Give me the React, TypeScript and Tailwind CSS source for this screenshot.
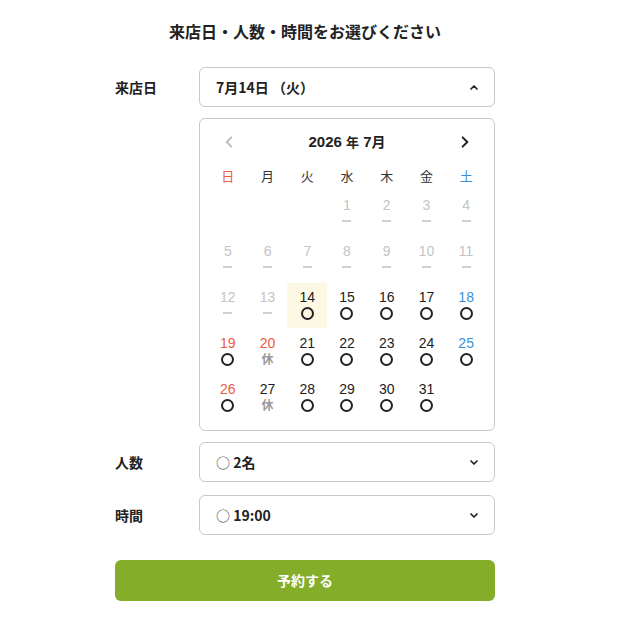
import React from "react";

type Cell = { d: number; kind: "past" | "ok" | "closed" } | null;

const FONT = { fontFamily: '"Liberation Sans", "Noto Sans CJK JP", sans-serif' };
const JP = { fontFamily: '"Noto Sans CJK JP", "Liberation Sans", sans-serif' };

function Chevron({ dir, color = "#222", size = 12 }: { dir: "up" | "down" | "left" | "right"; color?: string; size?: number }) {
  const paths: Record<string, string> = {
    up: "M3 8 L6 5 L9 8",
    down: "M3 5 L6 8 L9 5",
    left: "M8 2 L4 6 L8 10",
    right: "M4 2 L8 6 L4 10",
  };
  return (
    <svg width={size} height={size} viewBox="0 0 12 12" fill="none">
      <path d={paths[dir]} stroke={color} strokeWidth={1.7} strokeLinecap="round" strokeLinejoin="round" />
    </svg>
  );
}

export default function App() {
  const cells: Cell[] = [];
  for (let i = 0; i < 3; i++) cells.push(null);
  for (let d = 1; d <= 31; d++) {
    let kind: "past" | "ok" | "closed" = "ok";
    if (d <= 13) kind = "past";
    else if (d === 20 || d === 27) kind = "closed";
    cells.push({ d, kind });
  }
  const week = ["日", "月", "火", "水", "木", "金", "土"];

  const numColor = (idx: number, c: NonNullable<Cell>) => {
    if (c.kind === "past") return "text-[#c4c4c4]";
    const col = idx % 7;
    if (col === 0) return "text-[#ec5a3f]";
    if (col === 6) return "text-[#3a8fd9]";
    if (c.d === 20) return "text-[#ec5a3f]";
    return "text-[#222]";
  };

  return (
    <div className="w-[623px] min-h-[625px] bg-white" style={FONT}>
      <div className="ml-[115px] w-[380px] pt-[20px] pb-[24px]">
        <h1 className="text-center text-[16px] leading-[22px] font-bold text-[#222]" style={JP}>
          来店日・人数・時間をお選びください
        </h1>

        <div className="mt-[25px] flex">
          <div className="w-[84px] h-[40px] flex items-center text-[14px] font-bold text-[#222]" style={JP}>
            来店日
          </div>
          <div className="flex-1 flex flex-col">
            <div className="h-[40px] border border-[#c8c8c8] rounded-[6px] flex items-center justify-between pl-[16px] pr-[14px]">
              <span className="text-[14px] font-bold text-[#222]" style={JP}>7月14日 （火）</span>
              <Chevron dir="up" />
            </div>

            <div className="mt-[11px] border border-[#c8c8c8] rounded-[6px] px-[8px] pt-[11px] pb-[10px]">
              <div className="h-[24px] flex items-center justify-between px-[14px]">
                <Chevron dir="left" color="#bdbdbd" size={14} />
                <span className="text-[15px] font-bold text-[#222]">
                  2026 <span className="text-[13px]" style={JP}>年</span> 7<span className="text-[14px]" style={JP}>月</span>
                </span>
                <Chevron dir="right" color="#222" size={14} />
              </div>
              <div className="mt-[12px] grid grid-cols-7 h-[20px] items-center">
                {week.map((w, i) => (
                  <div
                    key={w}
                    className={`text-center text-[13px] ${i === 0 ? "text-[#ec5a3f]" : i === 6 ? "text-[#3a8fd9]" : "text-[#333]"}`}
                    style={JP}
                  >
                    {w}
                  </div>
                ))}
              </div>
              <div className="mt-[5px] grid grid-cols-7 gap-y-[1px]">
                {cells.map((c, i) =>
                  c === null ? (
                    <div key={"e" + i} className="h-[45px]" />
                  ) : (
                    <div
                      key={c.d}
                      className={`h-[45px] flex flex-col items-center pt-[6px] ${c.d === 14 ? "bg-[#fdf8e3]" : ""}`}
                    >
                      <div className={`text-[14px] leading-[16px] ${numColor(i, c)}`}>{c.d}</div>
                      {c.kind === "past" && <div className="mt-[7px] w-[9px] h-[2px] bg-[#cfcfcf]" />}
                      {c.kind === "ok" && (
                        <div className="mt-[2px] w-[13px] h-[13px] rounded-full border-[2.5px] border-[#222]" />
                      )}
                      {c.kind === "closed" && (
                        <div className="mt-[0px] text-[12px] leading-[16px] font-bold text-[#999]" style={JP}>
                          休
                        </div>
                      )}
                    </div>
                  )
                )}
              </div>
            </div>
          </div>
        </div>

        <div className="mt-[11px] flex">
          <div className="w-[84px] h-[40px] flex items-center text-[14px] font-bold text-[#222]" style={JP}>
            人数
          </div>
          <div className="flex-1 h-[40px] border border-[#c8c8c8] rounded-[6px] flex items-center justify-between pl-[16px] pr-[14px]">
            <span className="text-[14px] text-[#222]" style={JP}>
              <span className="text-[#444]">○</span> <span className="font-bold">2名</span>
            </span>
            <Chevron dir="down" />
          </div>
        </div>

        <div className="mt-[13px] flex">
          <div className="w-[84px] h-[40px] flex items-center text-[14px] font-bold text-[#222]" style={JP}>
            時間
          </div>
          <div className="flex-1 h-[40px] border border-[#c8c8c8] rounded-[6px] flex items-center justify-between pl-[16px] pr-[14px]">
            <span className="text-[14px] text-[#222]" style={JP}>
              <span className="text-[#444]">○</span> <span className="font-bold">19:00</span>
            </span>
            <Chevron dir="down" />
          </div>
        </div>

        <button
          className="mt-[25px] w-full h-[41px] rounded-[6px] bg-[#84ad2a] text-white text-[14px] font-bold"
          style={JP}
        >
          予約する
        </button>
      </div>
    </div>
  );
}
